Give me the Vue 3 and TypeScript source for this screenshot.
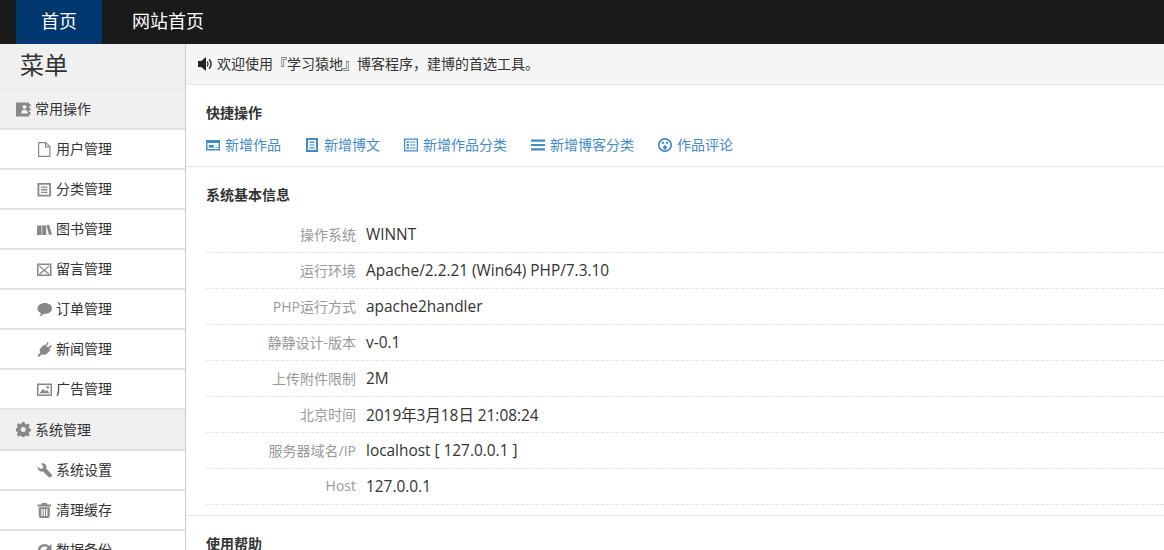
<script setup lang="ts">
interface Item { label: string; icon: string }
const opsMenu: Item[] = [
  { label: '用户管理', icon: 'file' },
  { label: '分类管理', icon: 'listalt' },
  { label: '图书管理', icon: 'books' },
  { label: '留言管理', icon: 'mail' },
  { label: '订单管理', icon: 'comment' },
  { label: '新闻管理', icon: 'plug' },
  { label: '广告管理', icon: 'picture' }
]
const sysMenu: Item[] = [
  { label: '系统设置', icon: 'wrench' },
  { label: '清理缓存', icon: 'trash' },
  { label: '数据备份', icon: 'repeat' }
]
const quick: Item[] = [
  { label: '新增作品', icon: 'card' },
  { label: '新增博文', icon: 'doc' },
  { label: '新增作品分类', icon: 'tasks' },
  { label: '新增博客分类', icon: 'bars' },
  { label: '作品评论', icon: 'face' }
]
const info = [
  ['操作系统', 'WINNT'],
  ['运行环境', 'Apache/2.2.21 (Win64) PHP/7.3.10'],
  ['PHP运行方式', 'apache2handler'],
  ['静静设计-版本', 'v-0.1'],
  ['上传附件限制', '2M'],
  ['北京时间', '2019年3月18日 21:08:24'],
  ['服务器域名/IP', 'localhost [ 127.0.0.1 ]'],
  ['Host', '127.0.0.1']
]
const icons: Record<string, string> = {
  contacts: 'M0 .5h13v14H0zM13 2h1.500v2.500H13zM13 6h1.500v2.500H13zM13 10h1.500v2.500H13zM8.500 3a2 2 0 1 0 .01 0zM5 11.500c0-2.400 1.400-3.700 3.500-3.700s3.500 1.300 3.500 3.700z',
  file: 'M1 0h8l4.500 4.500V15H1zM2.200 1.200V13.800H12.300V5.500H8V1.200zM9.200 1.700V4.300h2.600z',
  listalt: 'M.5 1h13.500v13.500H.5zM2.300 2.800V12.700H12.200V2.800zM4 4.500h6.500v1.300H4zM4 7.100h6.500v1.300H4zM4 9.700h6.500v1.300H4z',
  books: 'M0 3.500h4.600v9.500H0zM5.200 3.500h4v9.500h-4zM9.500 3.300l2.600-.6 2.900 9.800-3 .6z',
  mail: 'M0 1.500h14.500v12.500H0zM1.500 3V12.500H13V3zM2.800 3.500l4.450 4 4.450-4 .8.9L8.200 8l4.300 3.800-.8.9-4.450-3.800-4.450 3.800-.8-.9L6.300 8 2 4.400z',
  comment: 'M8 1c4 0 7 2.400 7 5.400s-3 5.400-7 5.400h-1.200C5.700 13.100 4 14 2.300 14.300c.9-.9 1.500-2 1.600-3.300C1.600 10.100 .5 8.400 .5 6.400.5 3.400 4 1 8 1z',
  plug: 'M10.500 0l1.200 1.200-2.300 2.700 1.700 1.600 2.500-2.400 1.200 1.200-2.500 2.600 1.200 1.200-3.600 3.700c-1.600 1.300-3.500 1.200-5 .4L2.200 15 .5 13.500 3.200 10.700c-.9-1.500-.7-3.300.5-4.600L7.300 2.500l1 1z',
  picture: 'M0 1.500h15v12.500H0zM1.500 3v9.500h12V3zM2.700 11.300l3.300-4.500 2.200 2.500 1.700-1.400 2.800 3.400zM10.800 4a1.400 1.400 0 1 1-.01 0z',
  gear: 'M6 0h2.500l.4 2 1.400.6 1.700-1.100 1.800 1.800-1.100 1.700.6 1.400 2 .4v2.500l-2 .4-.6 1.400 1.100 1.700-1.800 1.800-1.700-1.100-1.400.6-.4 2H6l-.4-2-1.400-.6-1.700 1.100-1.800-1.800 1.100-1.700-.6-1.400-2-.4V6.400l2-.4.6-1.400-1.100-1.700 1.800-1.800 1.700 1.100 1.400-.6zM7.250 5a2.500 2.500 0 1 0 .01 0z',
  wrench: 'M.5 3.500 3.300 6 5.800 5.200 6.300 3 3.700.8C6.200-.5 9 .8 9.400 3.500c.1.800 0 1.500-.2 2.100l5.100 5.300c.9 1 .8 2.300-.1 3.100-.9.800-2 .7-2.900-.2L6.200 8.500C3.300 9.300.1 7 .5 3.500z',
  trash: 'M5 0h4.600l.8 1.500h3.600v2H.5v-2h3.700zM1.800 4.300h11v8.700c0 1.100-.9 2-2 2H3.800c-1.100 0-2-.9-2-2zM4.300 6v7h1.300V6zM6.700 6v7h1.300V6zM9.100 6v7h1.300V6z',
  repeat: 'M7.500 1c1.900 0 3.600.8 4.800 2L14.500.8V7H8.300l2.400-2.200C9.800 3.900 8.700 3.500 7.500 3.500a4.200 4.200 0 1 0 3.800 6l2.200 1.100A6.700 6.700 0 1 1 7.500 1z',
  card: 'M0 2h14v10.500H0zM1.500 5v6h11V5zM2.800 7h5v2.800h-5zM9.300 8.800h2.400v1H9.300z',
  doc: 'M1 0h12v14H1zM3 2V12h8V2zM4.300 3.500h5.400v1.200H4.300zM4.300 6.400h5.400v1.200H4.300zM4.300 9.300h5.400v1.200H4.300z',
  tasks: 'M0 .5h14v13H0zM1.300 1.800V12.200H12.700V1.800zM2.700 3.200h2.200v1.800H2.700zM6 3.500h5.300v1.100H6zM2.700 6.100h2.200v1.800H2.700zM6 6.500h5.300v1.100H6zM2.700 9h2.200v1.800H2.700zM6 9.400h5.300v1.100H6z',
  bars: 'M0 1.500h14v2.200H0zM0 5.900h14v2.200H0zM0 10.300h14v2.200H0z',
  face: 'M7 0a7 7 0 1 0 .01 0zM7 1.700a5.300 5.300 0 1 1-.01 0zM4.800 3.500a1.200 1.200 0 1 0 .01 0zM9.200 3.500a1.200 1.200 0 1 0 .01 0zM7 7.300a1.900 2.200 0 1 0 .01 0z',
  sound: 'M0 4h3.300L8 0v14L3.300 10H0zM9.500 4.200c1.500 1.500 1.500 4.100 0 5.600l-.9-1c1-1 1-2.600 0-3.600zM11.600 2c2.900 2.800 2.900 7.200 0 10l-1-1c2.300-2.200 2.300-5.800 0-8z'
}
</script>

<template>
  <div class="page">
    <header class="top">
      <a class="tab active">首页</a>
      <a class="tab">网站首页</a>
    </header>
    <div class="body">
      <aside class="side">
        <h2 class="menu-title">菜单</h2>
        <div class="group">
          <svg class="ico" viewBox="0 0 15 15"><path fill-rule="evenodd" :d="icons.contacts" /></svg>
          <span class="lbl">常用操作</span>
        </div>
        <div v-for="m in opsMenu" :key="m.label" class="item">
          <svg class="ico" viewBox="0 0 15 15"><path fill-rule="evenodd" :d="icons[m.icon]" /></svg>
          <span class="lbl">{{ m.label }}</span>
        </div>
        <div class="group tall">
          <svg class="ico" viewBox="0 0 15 15"><path fill-rule="evenodd" :d="icons.gear" /></svg>
          <span class="lbl">系统管理</span>
        </div>
        <div v-for="m in sysMenu" :key="m.label" class="item">
          <svg class="ico" viewBox="0 0 15 15"><path fill-rule="evenodd" :d="icons[m.icon]" /></svg>
          <span class="lbl">{{ m.label }}</span>
        </div>
      </aside>
      <main class="main">
        <div class="notice">
          <svg class="sound" viewBox="0 0 14 14"><path fill-rule="evenodd" :d="icons.sound" /></svg>
          <span>欢迎使用『学习猿地』博客程序，建博的首选工具。</span>
        </div>
        <section class="quick">
          <h3 class="sec-title">快捷操作</h3>
          <div class="links">
            <a v-for="q in quick" :key="q.label" class="link">
              <svg class="ico" viewBox="0 0 14 14"><path fill-rule="evenodd" :d="icons[q.icon]" /></svg>
              <span>{{ q.label }}</span>
            </a>
          </div>
        </section>
        <section class="sysinfo">
          <h3 class="sec-title">系统基本信息</h3>
          <dl class="rows">
            <div v-for="r in info" :key="r[0]" class="row">
              <dt>{{ r[0] }}</dt>
              <dd>{{ r[1] }}</dd>
            </div>
          </dl>
        </section>
        <section class="help">
          <h3 class="sec-title">使用帮助</h3>
        </section>
      </main>
    </div>
  </div>
</template>

<style>
html, body { margin: 0; overflow: hidden; background: #fff; }
</style>

<style scoped>
.page {
  height: 550px;
  overflow: hidden;
  display: flex;
  flex-direction: column;
  font-family: "Open Sans", "Noto Sans CJK SC", sans-serif;
  font-size: 14px;
  color: #333;
}
.top {
  flex: 0 0 44px;
  display: flex;
  padding-left: 16px;
  gap: 5px;
  background: #1a1a1a;
}
.tab {
  padding: 0 25px;
  line-height: 42px;
  font-size: 18px;
  color: #fff;
}
.tab.active { background: #00376f; }
.body { flex: 1; display: flex; min-height: 0; }
.side {
  flex: 0 0 185px;
  border-right: 1px solid #ccc;
  background: #fff;
}
.menu-title {
  margin: 0;
  height: 45px;
  padding-left: 20px;
  border-bottom: 1px solid #e4e4e4;
  background: #f0f0f0;
  font-size: 24px;
  font-weight: 400;
  line-height: 42px;
}
.group {
  height: 38px;
  border-bottom: 2px solid #e2e2e2;
  background: #f0f0f0;
  padding-left: 16px;
  display: flex;
  align-items: center;
  gap: 4px;
}
.group.tall { height: 39px; }
.item {
  height: 38px;
  border-bottom: 2px solid #e4e4e4;
  padding-left: 37px;
  display: flex;
  align-items: center;
  gap: 4px;
}
.lbl { padding-bottom: 2px; }
.ico { width: 15px; height: 15px; flex: none; fill: #888; }
.main { flex: 1; min-width: 0; }
.notice {
  height: 40px;
  border-bottom: 1px solid #e4e4e4;
  background: #f5f5f5;
  padding-left: 12px;
  display: flex;
  align-items: center;
  gap: 5px;
}
.notice span { padding-bottom: 3px; }
.sound { width: 14px; height: 14px; fill: #222; }
.quick { border-bottom: 1px solid #e4e4e4; padding: 17px 0 0 20px; box-sizing: border-box; height: 82px; }
.sec-title { margin: 0; font-size: 14px; font-weight: 700; line-height: 22px; color: #333; }
.links { display: flex; gap: 24px; margin-top: 10px; }
.link { display: flex; align-items: center; gap: 5px; color: #428bca; line-height: 22px; }
.link .ico { fill: #428bca; width: 14px; height: 14px; }
.sysinfo { padding: 17px 0 0 20px; height: 349px; border-bottom: 1px solid #e4e4e4; box-sizing: border-box; }
.rows { margin: 11px 0 0; }
.row {
  height: 36px;
  box-sizing: border-box;
  border-bottom: 1px dashed #e4e4e4;
  padding-bottom: 2px;
  display: flex;
  align-items: center;
}
dt { width: 150px; text-align: right; color: #999; }
dd { margin: 0 0 0 10px; padding-top: 2px; font-size: 15.4px; }
.help { padding: 17px 0 0 20px; }
</style>
